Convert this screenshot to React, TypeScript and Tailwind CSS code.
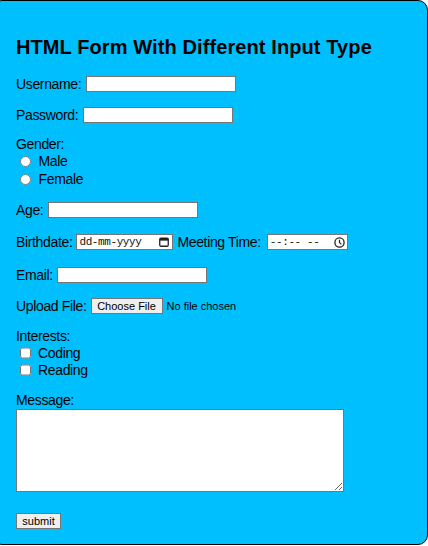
import React from "react";

const body = { fontFamily: '"Liberation Sans", Arial, sans-serif' };
const mono = { fontFamily: '"Liberation Mono", "DejaVu Sans Mono", monospace' };

function TextRow({ label, type = "text" }: { label: string; type?: string }) {
  return (
    <div className="flex h-[16px] items-center gap-[4.5px]">
      <span className="leading-[16px]">{label}</span>
      <input
        type={type}
        className="h-[16px] w-[150px] border border-[#767676] bg-white px-[2px] text-[12px] outline-none"
      />
    </div>
  );
}

function CalendarIcon() {
  return (
    <svg width="10" height="10" viewBox="0 0 10 10" className="shrink-0">
      <rect x="0.75" y="1.25" width="8.5" height="8" rx="1.2" fill="none" stroke="#222" strokeWidth="1.3" />
      <rect x="0.75" y="1.25" width="8.5" height="2.4" fill="#222" />
    </svg>
  );
}

function ClockIcon() {
  return (
    <svg width="11" height="11" viewBox="0 0 11 11" className="shrink-0">
      <circle cx="5.5" cy="5.5" r="4.6" fill="none" stroke="#222" strokeWidth="1.3" />
      <path d="M5.5 2.8V5.6L7.4 7.4" fill="none" stroke="#222" strokeWidth="1.2" />
    </svg>
  );
}

export default function App() {
  return (
    <div className="h-[546px] w-[428px] overflow-hidden bg-white">
      <form
        className="ml-[-8px] flex h-[545px] w-[436px] flex-col rounded-[10px] border border-black bg-[#00bfff] pl-[23px] pt-[34px] text-[14px] tracking-[-0.35px] text-black"
        style={body}
        onSubmit={(e) => e.preventDefault()}
      >
        <h2 className="text-[20px] font-bold leading-[24px] tracking-[0.1px]">
          HTML Form With Different Input Type
        </h2>

        <div className="mt-[17px]">
          <TextRow label="Username:" />
        </div>
        <div className="mt-[15px]">
          <TextRow label="Password:" type="password" />
        </div>

        <div className="mt-[12.5px] leading-[17.5px]">
          <div>Gender:</div>
          <label className="flex h-[17.5px] items-center">
            <input type="radio" name="gender" className="m-0 ml-[4px] h-[11px] w-[11px]" />
            <span className="ml-[7.5px]">Male</span>
          </label>
          <label className="flex h-[17.5px] items-center">
            <input type="radio" name="gender" className="m-0 ml-[4px] h-[11px] w-[11px]" />
            <span className="ml-[7.5px]">Female</span>
          </label>
        </div>

        <div className="mt-[14px]">
          <TextRow label="Age:" type="number" />
        </div>

        <div className="mt-[16px] flex h-[16px] items-center">
          <span>Birthdate:</span>
          <div className="ml-[4px] flex h-[16px] w-[97px] items-center justify-between border border-[#767676] bg-white pl-[2px] pr-[3px]">
            <span className="text-[11px] tracking-[-0.4px] text-[#111]" style={mono}>
              dd-mm-yyyy
            </span>
            <CalendarIcon />
          </div>
          <span className="ml-[4px]">Meeting Time:</span>
          <div className="ml-[6px] flex h-[16px] w-[81px] items-center justify-between border border-[#767676] bg-white pl-[2px] pr-[2px]">
            <span className="whitespace-pre text-[11px] tracking-[-0.4px] text-[#111]" style={mono}>
              {"--:-- --"}
            </span>
            <ClockIcon />
          </div>
        </div>

        <div className="mt-[17px]">
          <TextRow label="Email:" type="email" />
        </div>

        <div className="mt-[15px] flex h-[16px] items-center">
          <span>Upload File:</span>
          <button
            type="button"
            className="ml-[4px] h-[16px] w-[72px] border border-[#767676] bg-[#efefef] text-[11px] leading-[14px] tracking-normal text-black"
          >
            Choose File
          </button>
          <span className="ml-[4px] text-[11px] tracking-normal">No file chosen</span>
        </div>

        <div className="mt-[13.5px] leading-[17px]">
          <div>Interests:</div>
          <label className="flex h-[17px] items-center">
            <input type="checkbox" className="m-0 ml-[3.5px] h-[11.5px] w-[11.5px]" />
            <span className="ml-[7px]">Coding</span>
          </label>
          <label className="flex h-[17px] items-center">
            <input type="checkbox" className="m-0 ml-[3.5px] h-[11.5px] w-[11.5px]" />
            <span className="ml-[7px]">Reading</span>
          </label>
        </div>

        <div className="mt-[13px] leading-[17px]">Message:</div>
        <textarea className="h-[83px] w-[328px] resize border border-[#767676] bg-white p-[2px] text-[12px] outline-none" />

        <div className="mt-[18px]">
          <button
            type="submit"
            className="h-[16px] w-[45px] border border-[#767676] bg-[#efefef] text-[11px] leading-[14px] tracking-normal"
          >
            submit
          </button>
        </div>
      </form>
    </div>
  );
}
